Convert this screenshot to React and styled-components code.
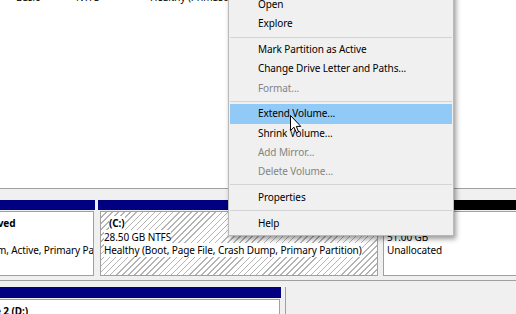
import React from "react";
import styled, { createGlobalStyle } from "styled-components";

const Global = createGlobalStyle`
  html, body { margin: 0; padding: 0; background: #f0f0f0; }
  body { overflow: hidden; }
  *, *::before, *::after { box-sizing: border-box; }
`;

const Screen = styled.div`
  position: relative;
  width: 516px;
  height: 314px;
  overflow: hidden;
  background: #f0f0f0;
  display: flex;
  flex-direction: column;
  font-family: "Noto Sans", "Open Sans", sans-serif;
  font-size: 10px;
  letter-spacing: -0.1px;
  color: #000;
`;

const VolumeList = styled.div`
  flex: none;
  height: 189px;
  background: #fff;
  border-bottom: 1px solid #a0a0a0;
  overflow: hidden;
`;

const VolumeRow = styled.div`
  display: grid;
  grid-template-columns: 16px 60px 74px 68px 1fr;
  margin-top: -12px;
  height: 19px;
  line-height: 19px;
  white-space: nowrap;
`;

const Cell = styled.div`
  overflow: hidden;
`;

const GraphView = styled.div`
  flex: 1;
  display: flex;
  flex-direction: column;
  overflow: hidden;
`;

const DiskRow = styled.div`
  flex: none;
  display: flex;
  gap: 3px;
  margin-left: -74px;
  padding: ${(p) => p.$pt}px 0 4px;
  height: ${(p) => p.$h}px;
  border-bottom: 1px solid #a0a0a0;
`;

const Partition = styled.div`
  flex: none;
  width: ${(p) => p.$w}px;
  display: flex;
  flex-direction: column;
`;

const Bar = styled.div`
  flex: none;
  height: ${(p) => p.$h}px;
  background: ${(p) => p.$color};
`;

const Body = styled.div`
  flex: 1;
  margin: 1px 1px 0 ${(p) => p.$ml}px;
  border: 1px solid #a0a0a0;
  padding: 5px 3px 2px;
  overflow: hidden;
  white-space: nowrap;
  line-height: 13.5px;
  background: ${(p) =>
    p.$selected
      ? "repeating-linear-gradient(135deg, #ffffff 0 3.2px, #b4b4b4 3.2px 4.3px)"
      : "#ffffff"};
`;

const Line = styled.div`
  height: 13.5px;
`;

const Txt = styled.span`
  background: #fff;
  font-weight: ${(p) => (p.$bold ? 700 : 400)};
  margin-left: ${(p) => p.$indent || 0}px;
`;

const Filler = styled.div`
  flex: 1;
  border-left: 1px solid #a0a0a0;
  margin-left: 1px;
`;

const Menu = styled.div`
  position: absolute;
  left: 228px;
  top: -8px;
  width: 226px;
  padding: 2px 1px 2px;
  background: #f0f0f0;
  border: 1px solid #b9b9b9;
  box-shadow: 2px 3px 5px rgba(0, 0, 0, 0.4);
`;

const Item = styled.div`
  height: 19.25px;
  line-height: 19.25px;
  padding-left: 28px;
  white-space: nowrap;
  color: ${(p) => (p.$disabled ? "#848484" : "#000")};
  background: ${(p) => (p.$active ? "#91c9f7" : "transparent")};
`;

const Separator = styled.div`
  height: 1px;
  margin: 3px 0 2.5px;
  background: #d4d4d4;
`;

const Cursor = styled.svg`
  position: absolute;
  left: 290px;
  top: 115px;
`;

const menu = [
  { label: "Open" },
  { label: "Explore" },
  { sep: true },
  { label: "Mark Partition as Active" },
  { label: "Change Drive Letter and Paths..." },
  { label: "Format...", disabled: true },
  { sep: true },
  { label: "Extend Volume...", active: true },
  { label: "Shrink Volume..." },
  { label: "Add Mirror...", disabled: true },
  { label: "Delete Volume...", disabled: true },
  { sep: true },
  { label: "Properties" },
  { sep: true },
  { label: "Help" },
];

export default function App() {
  return (
    <Screen>
      <Global />
      <VolumeList>
        <VolumeRow>
          <Cell />
          <Cell>Basic</Cell>
          <Cell>NTFS</Cell>
          <Cell>Healthy (Primary Partition)</Cell>
          <Cell>59.99 GB</Cell>
        </VolumeRow>
      </VolumeList>
      <GraphView>
        <DiskRow $pt={11} $h={92}>
          <Partition $w={169}>
            <Bar $h={10} $color="#000080" />
            <Body $ml={2}>
              <Line>
                <Txt $bold>System Reserved</Txt>
              </Line>
              <Line>
                <Txt>549 MB NTFS</Txt>
              </Line>
              <Line>
                <Txt>Healthy (System, Active, Primary Partition)</Txt>
              </Line>
            </Body>
          </Partition>
          <Partition $w={281}>
            <Bar $h={10} $color="#000080" />
            <Body $ml={2} $selected>
              <Line>
                <Txt $bold $indent={5}>(C:)</Txt>
              </Line>
              <Line>
                <Txt>28.50 GB NTFS</Txt>
              </Line>
              <Line>
                <Txt>Healthy (Boot, Page File, Crash Dump, Primary Partition)</Txt>
              </Line>
            </Body>
          </Partition>
          <Partition $w={220}>
            <Bar $h={10} $color="#000000" />
            <Body $ml={1}>
              <Line />
              <Line>
                <Txt>51.00 GB</Txt>
              </Line>
              <Line>
                <Txt>Unallocated</Txt>
              </Line>
            </Body>
          </Partition>
        </DiskRow>
        <DiskRow $pt={6} $h={60}>
          <Partition $w={355}>
            <Bar $h={11} $color="#000080" />
            <Body $ml={2}>
              <Line>
                <Txt $bold $indent={7}>New Volume 2 (D:)</Txt>
              </Line>
            </Body>
          </Partition>
          <Filler />
        </DiskRow>
      </GraphView>
      <Menu>
        {menu.map((m, i) =>
          m.sep ? (
            <Separator key={i} />
          ) : (
            <Item key={i} $disabled={m.disabled} $active={m.active}>
              {m.label}
            </Item>
          )
        )}
      </Menu>
      <Cursor width="12" height="19" viewBox="0 0 12 19">
        <path
          d="M0.5 0.5 L0.5 15.5 L4 12.2 L6.4 17.8 L8.6 16.9 L6.3 11.4 L10.8 11.4 Z"
          fill="#fff"
          stroke="#000"
          strokeWidth="1"
          strokeLinejoin="miter"
        />
      </Cursor>
    </Screen>
  );
}
